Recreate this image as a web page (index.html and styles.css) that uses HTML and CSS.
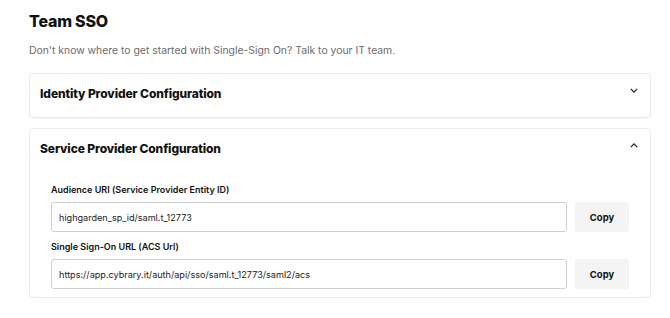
FILE: index.html
```html
<!DOCTYPE html>
<html lang="en">
<head>
  <meta charset="UTF-8">
  <title>Team SSO</title>
  <link rel="stylesheet" href="styles.css">
</head>
<body>
  <main class="page">
    <h1>Team SSO</h1>
    <p class="intro">Don't know where to get started with Single-Sign On? Talk to your IT team.</p>

    <!-- Identity provider (collapsed) -->
    <section class="panel">
      <div class="panel-head">
        <h2>Identity Provider Configuration</h2>
        <svg class="chev" viewBox="0 0 10 6" aria-hidden="true"><path d="M1 1l4 4 4-4"/></svg>
      </div>
    </section>

    <!-- Service provider (open) -->
    <section class="panel">
      <div class="panel-head">
        <h2>Service Provider Configuration</h2>
        <svg class="chev" viewBox="0 0 10 6" aria-hidden="true"><path d="M1 5l4-4 4 4"/></svg>
      </div>
      <div class="panel-body">
        <div class="field">
          <label>Audience URI (Service Provider Entity ID)</label>
          <div class="copy-row">
            <input type="text" value="highgarden_sp_id/saml.t_12773" readonly>
            <button type="button">Copy</button>
          </div>
        </div>
        <div class="field">
          <label>Single Sign-On URL (ACS Url)</label>
          <div class="copy-row">
            <input type="text" value="https://app.cybrary.it/auth/api/sso/saml.t_12773/saml2/acs" readonly>
            <button type="button">Copy</button>
          </div>
        </div>
      </div>
    </section>
  </main>
</body>
</html>
```

FILE: styles.css
```css
:root{
  --ink:#111;
  --muted:#6b6b6b;
  --line:#e9e9e9;
  --field-line:#cfcfcf;
}
*{box-sizing:border-box;margin:0;padding:0}
body{background:#fff;font-family:Inter,'Noto Sans',sans-serif;color:var(--ink)}
.page{width:622px;margin-left:29px;padding-top:11px}

h1{font-size:16px;font-weight:800;letter-spacing:-.2px;line-height:20px}
.intro{font-size:10.4px;color:var(--muted);margin-top:13px;line-height:14px}

/* collapsible panels */
.panel{border:1px solid var(--line);border-radius:4px;box-shadow:0 1px 2px rgba(0,0,0,.04);margin-top:10px}
.intro + .panel{margin-top:15px}
.panel-head{display:flex;align-items:center;justify-content:space-between;height:43px;padding:0 12px 0 10px}
.panel-head h2{font-size:12px;font-weight:800;letter-spacing:-.1px;margin-top:-4px}
.chev{width:8px;height:5px;fill:none;stroke:#222;stroke-width:1.6;margin-top:-11px}

.panel-body{padding:12px 21px 8px 21px}
.field + .field{margin-top:9px}
.field label{display:block;font-size:9px;font-weight:600;line-height:12px;margin-bottom:6px}
.copy-row{display:flex;gap:8px}
.copy-row input{flex:1;height:30px;border:1px solid var(--field-line);border-radius:3px;padding:0 7px;font:400 9.1px Inter,sans-serif;color:#222;background:#fff}
.copy-row button{width:54px;height:30px;border:none;border-radius:2px;background:#f4f4f4;font:700 9.5px Inter,sans-serif;color:#111}
```
